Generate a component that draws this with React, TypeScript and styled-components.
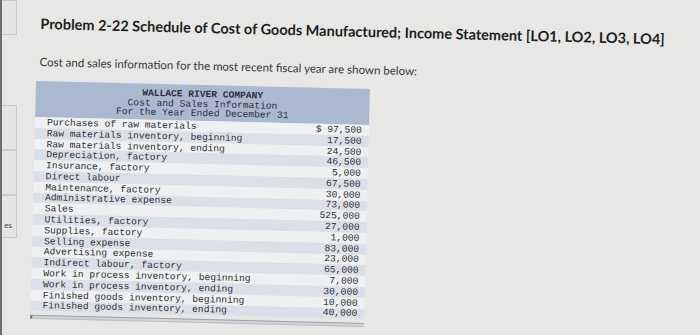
import * as React from 'react';
import styled, { createGlobalStyle } from 'styled-components';

const GlobalStyle = createGlobalStyle`
  html, body {
    margin: 0;
    padding: 0;
    background: #e7e8e5;
  }
  * {
    box-sizing: border-box;
  }
`;

const Page = styled.div`
  display: flex;
  width: 700px;
  height: 335px;
  overflow: hidden;
  background: #e7e8e5;
`;

const Sidebar = styled.aside`
  display: flex;
  flex-direction: column;
  width: 17px;
  flex-shrink: 0;
  border-left: 2px solid #6e6f6d;
`;

const SideBox = styled.div<{ $height: number; $gap?: number }>`
  display: flex;
  align-items: flex-end;
  justify-content: flex-end;
  height: ${({ $height }) => $height}px;
  margin-top: ${({ $gap }) => $gap ?? 0}px;
  border: 1px solid #c9cac8;
  border-left: none;
  background: #e4e5e3;
  padding: 0 4px 7px 0;
  font-family: 'Lato', 'Liberation Sans', sans-serif;
  font-size: 8px;
  line-height: 9px;
  color: #3e4248;
`;

const Main = styled.main`
  flex: 1;
  padding: 15px 0 0 24px;
  transform: rotate(1.4deg);
  transform-origin: 24px 0;
`;

const Title = styled.h1`
  margin: 0;
  font-family: 'Lato', 'Liberation Sans', sans-serif;
  font-weight: 700;
  font-size: 14.5px;
  line-height: 18px;
  color: #1d1e20;
  white-space: nowrap;
`;

const Intro = styled.p`
  margin: 22px 0 0;
  font-family: 'Lato', 'Liberation Sans', sans-serif;
  font-size: 11.5px;
  line-height: 14px;
  color: #34363a;
  white-space: nowrap;
`;

const Sheet = styled.section`
  display: flex;
  flex-direction: column;
  width: 334px;
  margin: 12px 0 0 -3px;
  font-family: 'Liberation Mono', 'Courier New', monospace;
  font-size: 9.6px;
  color: #2e3034;
`;

const Banner = styled.header`
  display: flex;
  flex-direction: column;
  align-items: center;
  height: 36px;
  padding-top: 5px;
  background: #abb9d0;
  line-height: 9.7px;
  span:first-child {
    font-weight: 700;
  }
`;

const Row = styled.div<{ $striped: boolean }>`
  display: flex;
  justify-content: space-between;
  align-items: center;
  height: 10.8px;
  padding: 0 7px 0 12px;
  background: ${({ $striped }) => ($striped ? '#dbe0e8' : '#eef0f1')};
  white-space: pre;
`;

const Scrollbar = styled.div`
  height: 4px;
  margin-top: 4px;
  border-left: 2px solid #6a6c70;
  border-top: 1px solid #9fa3a8;
  border-bottom: 1px solid #b9bcc0;
  background: #d2d5d9;
`;

const rows: [string, string][] = [
  ['Purchases of raw materials', '$ 97,500'],
  ['Raw materials inventory, beginning', '17,500'],
  ['Raw materials inventory, ending', '24,500'],
  ['Depreciation, factory', '46,500'],
  ['Insurance, factory', '5,000'],
  ['Direct labour', '67,500'],
  ['Maintenance, factory', '30,000'],
  ['Administrative expense', '73,000'],
  ['Sales', '525,000'],
  ['Utilities, factory', '27,000'],
  ['Supplies, factory', '1,000'],
  ['Selling expense', '83,000'],
  ['Advertising expense', '23,000'],
  ['Indirect labour, factory', '65,000'],
  ['Work in process inventory, beginning', '7,000'],
  ['Work in process inventory, ending', '30,000'],
  ['Finished goods inventory, beginning', '10,000'],
  ['Finished goods inventory, ending', '40,000'],
];

export default function App() {
  return (
    <>
      <GlobalStyle />
      <Page>
        <Sidebar>
          <SideBox $height={35} />
          <SideBox $height={45} $gap={70} />
          <SideBox $height={45} />
          <SideBox $height={43}>es</SideBox>
        </Sidebar>
        <Main>
          <Title>Problem 2-22 Schedule of Cost of Goods Manufactured; Income Statement [LO1, LO2, LO3, LO4]</Title>
          <Intro>Cost and sales information for the most recent fiscal year are shown below:</Intro>
          <Sheet>
            <Banner>
              <span>WALLACE RIVER COMPANY</span>
              <span>Cost and Sales Information</span>
              <span>For the Year Ended December 31</span>
            </Banner>
            {rows.map(([label, amount], i) => (
              <Row key={label} $striped={i % 2 === 1}>
                <span>{label}</span>
                <span>{amount}</span>
              </Row>
            ))}
            <Scrollbar />
          </Sheet>
        </Main>
      </Page>
    </>
  );
}
